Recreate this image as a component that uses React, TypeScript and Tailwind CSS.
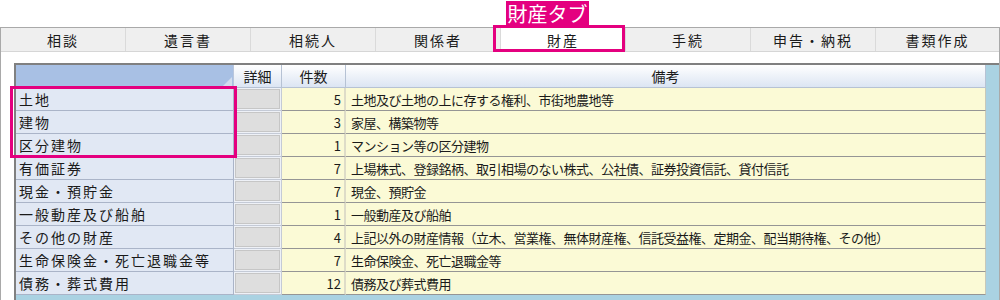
const tabs = ["相談", "遺言書", "相続人", "関係者", "財産", "手続", "申告・納税", "書類作成"];

const rows = [
    { name: "土地", count: 5, note: "土地及び土地の上に存する権利、市街地農地等" },
    { name: "建物", count: 3, note: "家屋、構築物等" },
    { name: "区分建物", count: 1, note: "マンション等の区分建物" },
    { name: "有価証券", count: 7, note: "上場株式、登録銘柄、取引相場のない株式、公社債、証券投資信託、貸付信託" },
    { name: "現金・預貯金", count: 7, note: "現金、預貯金" },
    { name: "一般動産及び船舶", count: 1, note: "一般動産及び船舶" },
    { name: "その他の財産", count: 4, note: "上記以外の財産情報（立木、営業権、無体財産権、信託受益権、定期金、配当期待権、その他）" },
    { name: "生命保険金・死亡退職金等", count: 7, note: "生命保険金、死亡退職金等" },
    { name: "債務・葬式費用", count: 12, note: "債務及び葬式費用" },
];

const App = () => {
    return (
        <div className="relative w-[1000px] h-[300px] overflow-hidden bg-white font-['Noto_Sans_CJK_JP','Noto_Sans',sans-serif] text-[#1a1a1a]">
            <div className="h-[27px]" />
            <div className="h-[273px] flex flex-col border-l border-t border-r border-[#a9a9a9]">
                {/* Tabs */}
                <div className="h-[24px] flex bg-[#efefef] border-b border-[#d6d6d6]">
                    {tabs.map((tab, idx) => (
                        <div
                            key={tab}
                            className={
                                idx === 4
                                    ? "w-[125px] flex items-center justify-center bg-white border-r border-[#dadada] text-[14px] tracking-[2px] leading-none"
                                    : idx === tabs.length - 1
                                        ? "flex-1 flex items-center justify-center text-[14px] tracking-[2px] leading-none"
                                        : "w-[125px] flex items-center justify-center border-r border-[#dadada] text-[14px] tracking-[2px] leading-none"
                            }
                        >
                            {tab}
                        </div>
                    ))}
                </div>
                <div className="h-[11px]" />

                {/* Grid */}
                <div className="flex-1 ml-[13px] border-l-2 border-t-2 border-[#808080] bg-[#aad2e2]">
                    <div className="flex h-[23px]">
                        <div className="relative w-[218px] bg-[#a8c0e4] border-r border-b border-[#b9c6dc]">
                            <svg className="absolute right-[1px] bottom-[1px]" width="9" height="9" viewBox="0 0 9 9">
                                <polygon points="9,0 9,9 0,9" fill="#d3ddee" />
                            </svg>
                        </div>
                        <div className="w-[48px] flex items-center justify-center bg-gradient-to-b from-white to-[#dce5f3] border-r border-b border-[#b6c2d4] text-[14px] leading-none">詳細</div>
                        <div className="w-[64px] flex items-center justify-center bg-gradient-to-b from-white to-[#dce5f3] border-r border-b border-[#b6c2d4] text-[14px] leading-none">件数</div>
                        <div className="w-[640px] flex items-center justify-center bg-gradient-to-b from-white to-[#dce5f3] border-r border-b border-[#b6c2d4] text-[14px] leading-none">備考</div>
                    </div>
                    {rows.map((row) => (
                        <div key={row.name} className="flex h-[23px]">
                            <div className="w-[218px] flex items-center pl-[3px] bg-[#e1e8f4] border-r border-b border-[#aab4c8] text-[14px] tracking-[2px] leading-none">
                                {row.name}
                            </div>
                            <div className="w-[48px] p-[1px] bg-[#eef1f7] border-r border-b border-[#c4cad6]">
                                <div className="h-full bg-[#dedede] border border-[#c6c6c6]" />
                            </div>
                            <div className="w-[64px] flex items-center justify-end pr-[3px] bg-[#fbfad6] border-r-2 border-[#dedcc8] border-b border-b-[#959595] text-[13px] leading-none">
                                {row.count}
                            </div>
                            <div className="w-[640px] flex items-center pl-[5px] bg-[#fbfad6] border-r border-[#c8c8b8] border-b border-b-[#959595] text-[13px] tracking-[-0.5px] leading-none whitespace-nowrap">
                                {row.note}
                            </div>
                        </div>
                    ))}
                </div>
            </div>

            {/* Annotations */}
            <div className="absolute left-[506px] top-[1px] w-[83px] h-[25px] flex items-center justify-center bg-[#e4007f] text-white text-[20px] leading-none">
                財産タブ
            </div>
            <div className="absolute left-[493px] top-[25px] w-[132px] h-[27px] border-[3px] border-[#e4007f]" />
            <div className="absolute left-[10px] top-[86px] w-[227px] h-[72px] border-[3px] border-[#e4007f]" />
        </div>
    );
};

export default App;
